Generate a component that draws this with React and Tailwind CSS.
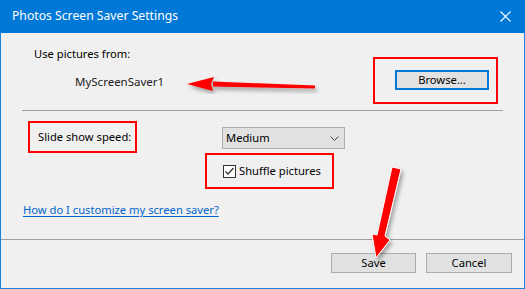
export default function App() {
  return (
    <div
      className="relative flex h-[289px] w-[525px] flex-col border border-t-0 border-[#1883d7] bg-[#f0f0f0] text-[11.2px] text-black"
      style={{ fontFamily: '"Noto Sans", "Open Sans", sans-serif' }}
    >
      <TitleBar />

      <div className="flex flex-1 flex-col px-[21px]">
        <div className="flex h-[77px] items-start justify-between">
          <div className="flex flex-col whitespace-nowrap">
            <p className="ml-[12px] mt-[13px] leading-[16px]">Use pictures from:</p>
            <p className="ml-[53px] mt-[12px] text-[11.5px] leading-[16px] text-[#222]">MyScreenSaver1</p>
          </div>
          <div className="mr-[5px] mt-[24px] flex h-[47px] w-[125px] items-start justify-end border-2 border-[#ff0000] pr-[7px] pt-[11px]">
            <button className="h-[20px] w-[94px] border-2 border-[#0078d7] bg-[#e1e1e1] leading-[14px]">
              Browse...
            </button>
          </div>
        </div>

        <div className="h-px bg-[#a0a0a0]" />

        <div className="mt-[10px] flex items-start">
          <div className="ml-[6px] flex h-[32px] w-[109px] items-center whitespace-nowrap border-2 border-[#ff0000] pl-[8px]">
            Slide show speed:
          </div>
          <SpeedSelect />
        </div>

        <div className="ml-[183px] flex h-[36px] w-[129px] items-center whitespace-nowrap border-2 border-[#ff0000] pl-[16px]">
          <Checkbox />
          <span className="ml-[3px]">Shuffle pictures</span>
        </div>

        <a className="ml-[1px] mt-[13px] self-start whitespace-nowrap leading-[16px] text-[#0066cc] underline underline-offset-2">
          How do I customize my screen saver?
        </a>
      </div>

      <div className="flex h-[49px] items-start justify-end gap-[10px] border-t border-[#a0a0a0] pr-[12px] pt-[13px]">
        <button className="h-[20px] w-[85px] border border-[#adadad] bg-[#e1e1e1] leading-[18px]">Save</button>
        <button className="h-[20px] w-[86px] border border-[#adadad] bg-[#e1e1e1] leading-[18px]">Cancel</button>
      </div>

      <Arrows />
    </div>
  );
}

function TitleBar() {
  return (
    <div className="-mx-px flex h-[33px] shrink-0 items-center justify-between bg-[#0078d7] pl-[12px] pr-[10px] text-[12.2px] text-white">
      <span>Photos Screen Saver Settings</span>
      <svg width="11" height="11" viewBox="0 0 11 11" className="mr-[4px]">
        <path d="M0.5 0.5 L10.5 10.5 M10.5 0.5 L0.5 10.5" stroke="white" strokeWidth="1.2" />
      </svg>
    </div>
  );
}

function SpeedSelect() {
  return (
    <div className="ml-[85px] mt-[6px] flex h-[22px] w-[123px] items-center justify-between border border-[#adadad] bg-[#e1e1e1] pl-[3px] pr-[5px]">
      <span>Medium</span>
      <svg width="9" height="5" viewBox="0 0 9 5">
        <path d="M0.5 0.5 L4.5 4.5 L8.5 0.5" fill="none" stroke="#444" strokeWidth="1" />
      </svg>
    </div>
  );
}

function Checkbox() {
  return (
    <div className="flex h-[13px] w-[13px] shrink-0 items-center justify-center border border-[#333] bg-white">
      <svg width="11" height="11" viewBox="0 0 11 11">
        <path d="M1.5 5.5 L4 8 L9.5 2" fill="none" stroke="#333" strokeWidth="1.3" />
      </svg>
    </div>
  );
}

function Arrows() {
  return (
    <svg
      className="pointer-events-none absolute left-0 top-0"
      width="525"
      height="289"
      viewBox="0 0 525 289"
    >
      <defs>
        <filter id="sombra" x="-20%" y="-20%" width="140%" height="140%">
          <feDropShadow dx="2" dy="3" stdDeviation="2" floodColor="#000" floodOpacity="0.35" />
        </filter>
      </defs>
      <g filter="url(#sombra)">
        <polygon points="314,85.5 314,88.5 212,86.5 212,81.5" fill="#ff0000" />
        <polygon points="186,84 213,77 210,84 212,91" fill="#ff0000" />
      </g>
      <g filter="url(#sombra)">
        <polygon
          points="391,167 400,169 384,236 389,240 375,258 371,234 376,235"
          fill="#ff0000"
          stroke="white"
          strokeWidth="1"
          strokeLinejoin="round"
        />
      </g>
    </svg>
  );
}
